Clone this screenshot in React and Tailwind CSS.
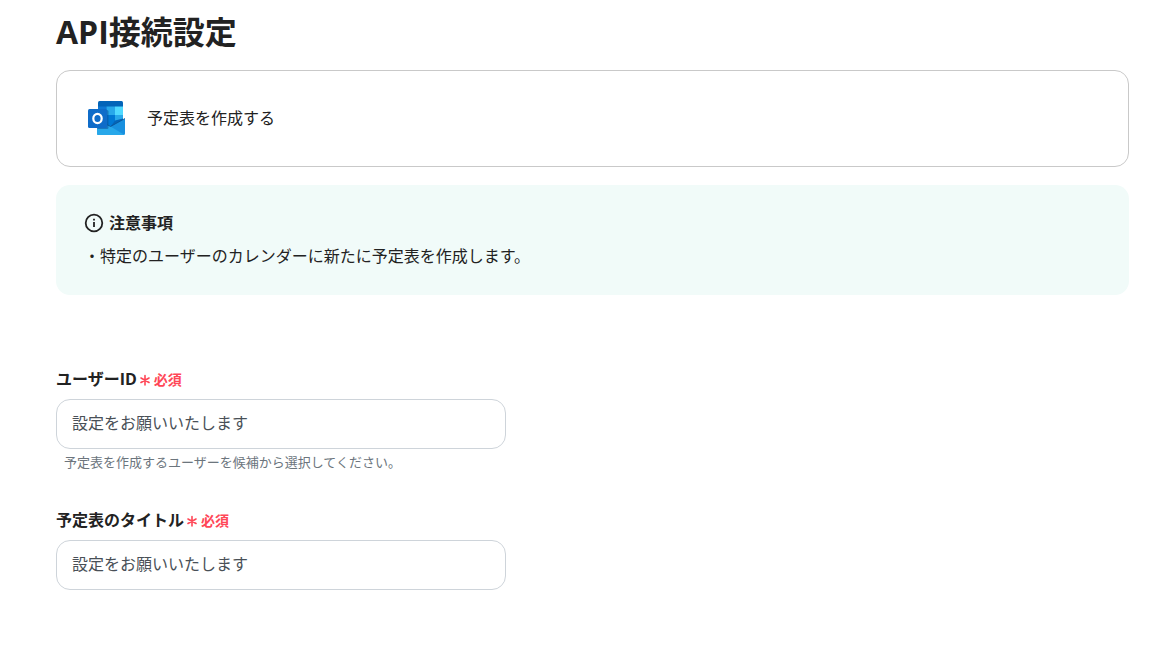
import React from 'react'

const fields = [
  {
    id: 'user-id',
    label: 'ユーザーID',
    placeholder: '設定をお願いいたします',
    help: '予定表を作成するユーザーを候補から選択してください。'
  },
  {
    id: 'calendar-title',
    label: '予定表のタイトル',
    placeholder: '設定をお願いいたします',
    help: ''
  }
]

const OutlookIcon = () => (
  <svg className="w-[37px] h-[37px] shrink-0" viewBox="0 0 37 37" aria-hidden="true">
    {/* calendar tiles */}
    <path d="M11.5 1h22A1.500 1.500 0 0 1 35 2.500V28H10V2.500A1.500 1.500 0 0 1 11.500 1z" fill="#0364b8" />
    <path d="M10 6.500h8.500V15H10z" fill="#0f78d4" />
    <path d="M18.500 6.500H27V15h-8.500z" fill="#28a8ea" />
    <path d="M27 6.500h8V15h-8z" fill="#50d9ff" />
    <path d="M10 15h8.500v12H10z" fill="#0a5fb4" />
    <path d="M18.500 15H27v12h-8.500z" fill="#0078d4" />
    <path d="M27 15h8v9h-8z" fill="#28a8ea" />
    <path d="M27 20.500l8-2v5l-13 4z" fill="#0364b8" />
    {/* envelope */}
    <path d="M9 20l13.500 6.500L37 18.500v15a1.500 1.500 0 0 1-1.500 1.500h-25A1.500 1.500 0 0 1 9 33.500z" fill="#1890df" />
    <path d="M9 19l13.500 7.500 13.800 8.200a1.500 1.500 0 0 1-.8.3h-25A1.500 1.500 0 0 1 9 33.500z" fill="#28a8ea" />
    <path d="M18 24.200l4.500 2.300L37 18.500" fill="none" stroke="#0a4f91" strokeWidth=".8" />
    {/* front badge */}
    <rect x="9" y="10" width="11.500" height="19" rx="1.500" fill="#0a5099" opacity=".55" />
    <rect x="0" y="9" width="19" height="19" rx="1.500" fill="#0f6cc9" />
    <ellipse cx="9.500" cy="18.500" rx="4.200" ry="4.700" fill="none" stroke="#fff" strokeWidth="2.200" />
  </svg>
)

const InfoIcon = () => (
  <svg className="w-5 h-5 shrink-0" viewBox="0 0 20 20" fill="none" stroke="#222" strokeWidth="1.800" aria-hidden="true">
    <circle cx="10" cy="10" r="8.300" />
    <path d="M10 9v5M10 5.800v1.800" />
  </svg>
)

const AsteriskIcon = () => (
  <svg className="w-2.5 h-3" viewBox="0 0 10 12" fill="none" stroke="currentColor" strokeWidth="1.600" strokeLinecap="round" aria-hidden="true">
    <path d="M5 1.500v9.500M1 4l8 4.500M9 4L1 8.500" />
  </svg>
)

const Field = ({ id, label, placeholder, help }) => (
  <div>
    <label htmlFor={id} className="flex items-center h-6 mb-2 font-bold">
      <span>{label}</span>
      <span className="flex items-center gap-1 ml-[3px] mt-0.5 text-sm font-bold text-[#ff4757]">
        <AsteriskIcon />
        必須
      </span>
    </label>
    <input
      id={id}
      type="text"
      placeholder={placeholder}
      required
      className="block w-full max-w-[450px] h-[50px] px-[15px] pb-0.5 rounded-[14px] border border-[#ced4da] bg-white text-[#495057] placeholder:text-[#495057] shadow-none outline-none focus:border-blue-400"
    />
    {help && <p className="mt-[3px] ml-2 text-[13px] leading-5 text-[#6c757d]">{help}</p>}
  </div>
)

const App = () => {
  return (
    <main className="pl-14 pr-[37px] pt-2 pb-12 bg-white text-[#222] text-base font-['Open_Sans','Noto_Sans_CJK_JP',sans-serif]">
      <h1 className="h-[50px] mb-3 text-[32px] leading-[48px] font-bold">API接続設定</h1>

      <section className="flex items-center h-[97px] px-[31px] gap-[22px] rounded-[14px] border border-[#c9c9c9]">
        <OutlookIcon />
        <p className="pb-0.5">予定表を作成する</p>
      </section>

      {/* Notes */}
      <section className="mt-[18px] px-7 py-[26px] rounded-[14px] bg-[#f1fbf9]">
        <h2 className="flex items-center gap-[5px] h-6 mb-2 font-bold">
          <InfoIcon />
          注意事項
        </h2>
        <p className="leading-[26px]">・特定のユーザーのカレンダーに新たに予定表を作成します。</p>
      </section>

      <form className="mt-[72px] space-y-9">
        {fields.map((field) => (
          <Field key={field.id} {...field} />
        ))}
      </form>
    </main>
  )
}

export default App
